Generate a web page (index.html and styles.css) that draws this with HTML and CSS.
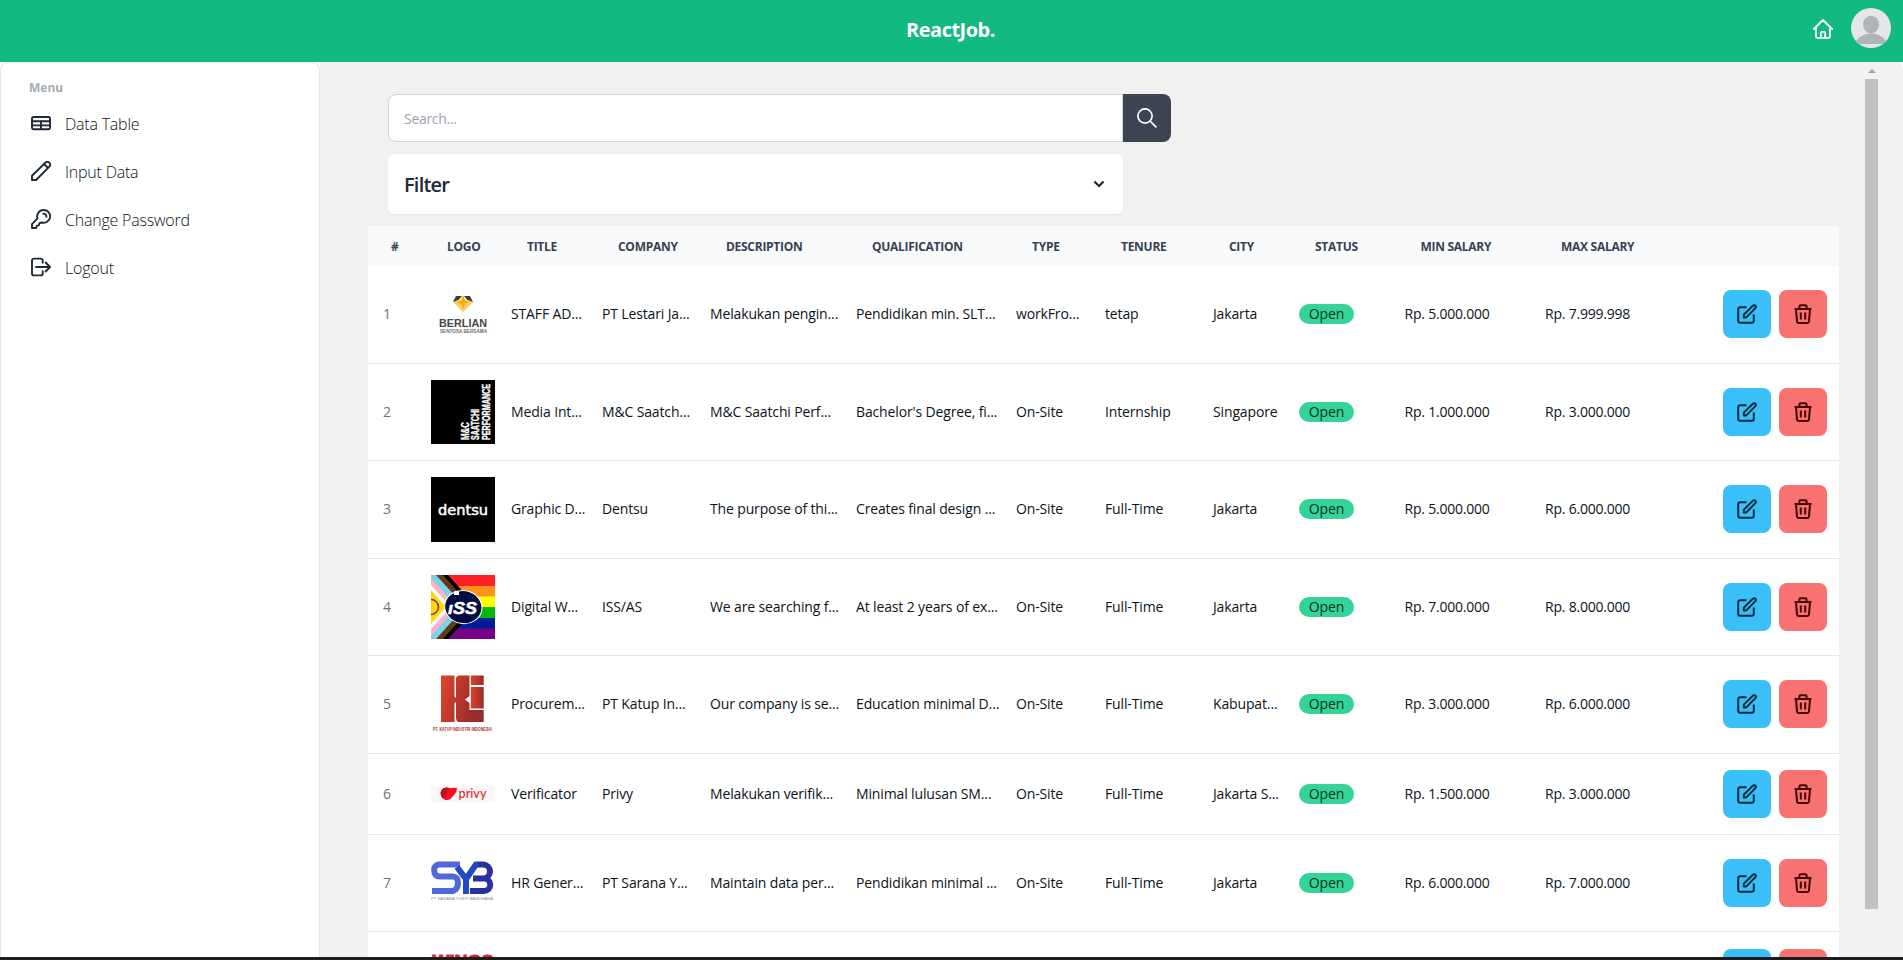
FILE: index.html
```html
<!DOCTYPE html>
<html lang="en">
<head>
<meta charset="utf-8">
<title>ReactJob.</title>
<link rel="stylesheet" href="styles.css">
</head>
<body>
<svg class="sprite" aria-hidden="true">
  <symbol id="i-edit" viewBox="0 0 20 20"><path d="M9.5 3.2H3.2A2 2 0 0 0 1.2 5.2V16.8A2 2 0 0 0 3.2 18.8H14.8A2 2 0 0 0 16.8 16.8V10.5M6.8 13.4V10.6L15.9 1.7A1.6 1.6 0 0 1 18.4 4.1L9.3 13.4Z"/></symbol>
  <symbol id="i-trash" viewBox="0 0 20 20"><path d="M1.5 4.9H18.5M6.4 4.6V2.4A1.2 1.2 0 0 1 7.6 1.2H12.4A1.2 1.2 0 0 1 13.6 2.4V4.6M3 5L4 17.4A1.6 1.6 0 0 0 5.6 18.9H14.4A1.6 1.6 0 0 0 16 17.4L17 5M7.8 8.4V15.6M12.2 8.4V15.6"/></symbol>
</svg>
<header class="topbar">
  <h1 class="brand">ReactJob.</h1>
  <nav class="tools">
    <svg class="home" viewBox="0 0 20 20"><path d="M.8 10L10 1L19.200 10M3 8.500V17.500A1.300 1.300 0 0 0 4.300 18.900H15.700A1.300 1.300 0 0 0 17 17.500V8.500M7.800 18.500V13.700A.8.800 0 0 1 8.600 12.900H11.400A.8.800 0 0 1 12.200 13.700V18.500"/></svg>
    <svg class="avatar" viewBox="0 0 40 40"><clipPath id="c-av"><circle cx="20" cy="20" r="20"/></clipPath><g clip-path="url(#c-av)"><rect width="40" height="40" fill="#e4e6e9"/><ellipse cx="20" cy="16.500" rx="8" ry="8.700" fill="#aeb4b7"/><path d="M4 36C6 29 13 25.500 20 25.500S34 29 36 36Z" fill="#aeb4b7"/></g></svg>
  </nav>
</header>
<div class="shell">
  <aside class="sidebar">
    <p class="menu-title">Menu</p>
    <a class="menu-item"><svg viewBox="0 0 20 20"><rect x="1" y="4" width="18" height="12.200" rx="1.600"/><path d="M1 8.300H19M1 12.400H19M10 8V16"/></svg><span>Data Table</span></a>
    <a class="menu-item"><svg viewBox="0 0 20 20"><path d="M1 19V14.800L14.300 1.700A2.400 2.400 0 0 1 18.300 5.700L5.200 19ZM13 3L17 7"/></svg><span>Input Data</span></a>
    <a class="menu-item"><svg viewBox="0 0 20 20"><path d="M12.600 1A6.400 6.400 0 1 1 10.800 13.500L8.600 14.200L7.700 16.400L5.900 16.700L5.200 19H1V15.200L6.500 9.400A6.400 6.400 0 0 1 12.600 1ZM12.200 4.600A3.300 3.300 0 0 1 15.400 7.800"/></svg><span>Change Password</span></a>
    <a class="menu-item"><svg viewBox="0 0 20 20"><path d="M11.700 5.800V3.600A2 2 0 0 0 9.700 1.600H3A2 2 0 0 0 1 3.600V16.400A2 2 0 0 0 3 18.400H9.700A2 2 0 0 0 11.700 16.400V14.200M5 10H19M14.700 5.500L19 10L14.700 14.500"/></svg><span>Logout</span></a>
  </aside>
  <main class="content">
    <div class="page">
      <form class="search">
        <div class="search-input">Search...</div>
        <div class="search-btn"><svg viewBox="0 0 20 20"><circle cx="8" cy="8" r="7.100"/><path d="M13 13L19.400 19.400"/></svg></div>
      </form>
      <div class="filter"><span>Filter</span><svg viewBox="0 0 12 8"><path d="M1.400 1.500L6 6L10.600 1.500"/></svg></div>
      <div class="table">
        <div class="row head"><span>#</span><span>LOGO</span><span>TITLE</span><span>COMPANY</span><span>DESCRIPTION</span><span>QUALIFICATION</span><span>TYPE</span><span>TENURE</span><span>CITY</span><span>STATUS</span><span>MIN SALARY</span><span>MAX SALARY</span></div>

        <div class="row"><span class="num">1</span>
          <svg class="logo" viewBox="0 0 64 64"><path d="M25 14H31L26 20H22Z M39 14H33L38 20H42Z" fill="#3a3d44"/><path d="M22 20L32 30L42 20L37 18L32 23L27 18Z" fill="#f9cd62"/><path d="M32 13L34 18L38 20L34 22L32 27L30 22L26 20L30 18Z" fill="#f5ae0b"/><text x="8" y="44.500" textLength="48" lengthAdjust="spacingAndGlyphs" font-size="11" font-weight="700" fill="#46474c">BERLIAN</text><text x="9" y="50.500" textLength="47" lengthAdjust="spacingAndGlyphs" font-size="4.500" font-weight="700" fill="#6c6c70">SENTOSA BERSAMA</text></svg>
          <span>STAFF AD...</span><span>PT Lestari Ja...</span><span>Melakukan pengin...</span><span>Pendidikan min. SLT...</span><span>workFro...</span><span>tetap</span><span>Jakarta</span><span class="badge">Open</span><span>Rp. 5.000.000</span><span>Rp. 7.999.998</span>
          <div class="actions"><i class="btn edit"><svg><use href="#i-edit"/></svg></i><i class="btn del"><svg><use href="#i-trash"/></svg></i></div></div>

        <div class="row"><span class="num">2</span>
          <svg class="logo" viewBox="0 0 64 64"><rect width="64" height="64"/><g transform="rotate(-90)" fill="#fff" stroke="#fff" stroke-width=".4" font-size="11.500" font-weight="700"><text x="-60" y="38.300" textLength="18" lengthAdjust="spacingAndGlyphs">M&amp;C</text><text x="-60" y="48.400" textLength="31" lengthAdjust="spacingAndGlyphs">SAATCHI</text><text x="-60" y="58.700" textLength="56" lengthAdjust="spacingAndGlyphs">PERFORMANCE</text></g></svg>
          <span>Media Int...</span><span>M&amp;C Saatch...</span><span>M&amp;C Saatchi Perf...</span><span>Bachelor's Degree, fi...</span><span>On-Site</span><span>Internship</span><span>Singapore</span><span class="badge">Open</span><span>Rp. 1.000.000</span><span>Rp. 3.000.000</span>
          <div class="actions"><i class="btn edit"><svg><use href="#i-edit"/></svg></i><i class="btn del"><svg><use href="#i-trash"/></svg></i></div></div>

        <div class="row"><span class="num">3</span>
          <svg class="logo tall" viewBox="0 0 64 65"><rect width="64" height="65"/><text class="dentsu" x="7" y="38" textLength="50" lengthAdjust="spacingAndGlyphs" font-size="14" fill="#fff" stroke="#fff" stroke-width=".5">dentsu</text></svg>
          <span>Graphic D...</span><span>Dentsu</span><span>The purpose of thi...</span><span>Creates final design ...</span><span>On-Site</span><span>Full-Time</span><span>Jakarta</span><span class="badge">Open</span><span>Rp. 5.000.000</span><span>Rp. 6.000.000</span>
          <div class="actions"><i class="btn edit"><svg><use href="#i-edit"/></svg></i><i class="btn del"><svg><use href="#i-trash"/></svg></i></div></div>

        <div class="row"><span class="num">4</span>
          <svg class="logo" viewBox="0 0 64 64"><rect width="64" height="11" fill="#ff1f28"/><rect y="11" width="64" height="11" fill="#ff921c"/><rect y="21.500" width="64" height="11" fill="#ff0"/><rect y="32" width="64" height="11" fill="#05b90b"/><rect y="43" width="64" height="11" fill="#021c99"/><rect y="53.500" width="64" height="10.500" fill="#770088"/><path d="M0 0H17L46 32L17 64H0Z" fill="#000"/><path d="M0 0H12L41 32L12 64H0Z" fill="#623a16"/><path d="M0 0H5L34 32L5 64H0Z" fill="#7bd3ea"/><path d="M0 3L26 32L0 61Z" fill="#ffb0c7"/><path d="M0 10L20 32L0 54Z" fill="#fff"/><path d="M0 15L15 32L0 49Z" fill="#ffd900"/><circle cx="0" cy="32" r="7.500" fill="none" stroke="#753096" stroke-width="1.500"/><path d="M-2 22H-12V42H-2Z" fill="none"/><ellipse cx="32.300" cy="32" rx="18.700" ry="16.500" transform="rotate(10 32 32)" fill="#030b45" stroke="#fff"/><rect x="23" y="16" width="5" height="4" fill="#fff"/><text x="17" y="38.500" textLength="29" lengthAdjust="spacingAndGlyphs" font-size="16" font-weight="700" font-style="italic" fill="#fff" stroke="#fff" stroke-width=".5">ıSS</text></svg>
          <span>Digital W...</span><span>ISS/AS</span><span>We are searching f...</span><span>At least 2 years of ex...</span><span>On-Site</span><span>Full-Time</span><span>Jakarta</span><span class="badge">Open</span><span>Rp. 7.000.000</span><span>Rp. 8.000.000</span>
          <div class="actions"><i class="btn edit"><svg><use href="#i-edit"/></svg></i><i class="btn del"><svg><use href="#i-trash"/></svg></i></div></div>

        <div class="row"><span class="num">5</span>
          <svg class="logo" viewBox="0 0 64 64"><defs><linearGradient id="g-ki" x1="10" x2="53" y1="0" y2="12" gradientUnits="userSpaceOnUse"><stop stop-color="#e04529"/><stop offset="1" stop-color="#982b2b"/></linearGradient><linearGradient id="g-i" x1="39" x2="53" y1="0" y2="0" gradientUnits="userSpaceOnUse"><stop stop-color="#e04529"/><stop offset="1" stop-color="#982b2b"/></linearGradient></defs><path d="M10 3.500H23.500V24.500L25 26V6Q25.500 3.500 28 3.500H38.500V24L34 27.500L38.500 31V38H52.700V50H27.500Q25 49 25 46V30.500H23.500V50H10Z" fill="url(#g-ki)"/><path d="M39.800 3.500H52.700V13H39.800Z M39.800 15H52.700V36.500H39.800Z" fill="url(#g-i)"/><text x="2" y="59" textLength="59" lengthAdjust="spacingAndGlyphs" font-size="4.500" font-weight="700" fill="#a33">PT. KATUP INDUSTRI INDONESIA</text></svg>
          <span>Procurem...</span><span>PT Katup In...</span><span>Our company is se...</span><span>Education minimal D...</span><span>On-Site</span><span>Full-Time</span><span>Kabupat...</span><span class="badge">Open</span><span>Rp. 3.000.000</span><span>Rp. 6.000.000</span>
          <div class="actions"><i class="btn edit"><svg><use href="#i-edit"/></svg></i><i class="btn del"><svg><use href="#i-trash"/></svg></i></div></div>

        <div class="row short"><span class="num">6</span>
          <svg class="logo" viewBox="0 0 64 64"><rect y="23.500" width="64" height="17" fill="#f8f8f8"/><path d="M15.500 25.500C18 25.500 19 26.500 20 26L26 25.800Q26 31 22 34C19 39 14 39 11.500 36C7 31 11 25.500 15.500 25.500Z" fill="#fb0b1c"/><path d="M10 33Q8.500 26 15.500 25.500L18 26.500L12 36.500Q10.500 35 10 33Z" fill="#bd1125"/><text class="privy" x="27.500" y="36" textLength="28" lengthAdjust="spacingAndGlyphs" font-size="12.500" fill="#ef2531">privy</text></svg>
          <span>Verificator</span><span>Privy</span><span>Melakukan verifik...</span><span>Minimal lulusan SM...</span><span>On-Site</span><span>Full-Time</span><span>Jakarta S...</span><span class="badge">Open</span><span>Rp. 1.500.000</span><span>Rp. 3.000.000</span>
          <div class="actions"><i class="btn edit"><svg><use href="#i-edit"/></svg></i><i class="btn del"><svg><use href="#i-trash"/></svg></i></div></div>

        <div class="row"><span class="num">7</span>
          <svg class="logo" viewBox="0 0 64 64"><g fill="none" stroke-width="6"><path d="M29 13.500H8A5 5 0 0 0 3.200 19Q3.200 25.500 9 25.500H22Q27 26 27 32T22 40H1" stroke="#5068dc"/><path d="M39 40H53A5.800 5.800 0 0 0 53 27.500H42H52A6.800 6.800 0 0 0 52 13.500H45" stroke="#29319c"/><path d="M26 16L35 28L46 12M35 26V43" stroke="#2447c4"/></g><text x="0" y="49" textLength="62" lengthAdjust="spacingAndGlyphs" font-size="3.800" fill="#8b8b98">PT SARANA YUKTI BANDHANA</text></svg>
          <span>HR Gener...</span><span>PT Sarana Y...</span><span>Maintain data per...</span><span>Pendidikan minimal ...</span><span>On-Site</span><span>Full-Time</span><span>Jakarta</span><span class="badge">Open</span><span>Rp. 6.000.000</span><span>Rp. 7.000.000</span>
          <div class="actions"><i class="btn edit"><svg><use href="#i-edit"/></svg></i><i class="btn del"><svg><use href="#i-trash"/></svg></i></div></div>

        <div class="row short last"><span class="num"></span>
          <svg class="logo" viewBox="0 0 64 64"><text x="1.500" y="26" textLength="61" lengthAdjust="spacingAndGlyphs" font-size="17" font-weight="700" fill="#d81f2c" stroke="#d81f2c">WINGS</text></svg>
          <span></span><span></span><span></span><span></span><span></span><span></span><span></span><span></span><span></span><span></span>
          <div class="actions"><i class="btn edit"><svg><use href="#i-edit"/></svg></i><i class="btn del"><svg><use href="#i-trash"/></svg></i></div></div>
      </div>
    </div>
    <div class="scrollbar"><b class="arrow"></b><b class="thumb"></b></div>
  </main>
</div>
<div class="edge"></div>
</body>
</html>
```
FILE: styles.css
```css
* { box-sizing: border-box; }
body { margin: 0; height: 960px; overflow: hidden; display: flex; flex-direction: column; background: #fff; color: #1f2937; font-family: "Open Sans", "Noto Sans", sans-serif; }
h1, p { margin: 0; }
svg { display: block; }
.sprite { display: none; }
.topbar { flex: none; height: 62px; background: #12b981; display: grid; grid-template-columns: 1fr auto 1fr; align-items: center; padding: 0 12px; }
.brand { grid-column: 2; color: #fff; font-size: 20px; line-height: 28px; font-weight: 700; letter-spacing: -.5px; padding-bottom: 2px; margin-right: 2px; }
.tools { justify-self: end; display: flex; align-items: center; gap: 18px; padding-bottom: 6px; }
.home { width: 20px; height: 20px; margin-top: 2px; fill: none; stroke: #fff; stroke-width: 1.800; stroke-linejoin: round; stroke-linecap: round; }
.avatar { width: 40px; height: 40px; }
.shell { flex: none; height: 895px; display: flex; overflow: hidden; }
.sidebar { flex: none; width: 320px; background: #fff; border: 1px solid #e5e7eb; border-bottom: 0; border-radius: 8px 8px 0 0; padding: 17px 28px; }
.menu-title { font-size: 12px; line-height: 16px; font-weight: 700; color: #a6abb2; margin-bottom: 3px; }
.menu-item { display: flex; align-items: center; gap: 14px; height: 48px; padding: 0 2px; font-size: 16px; font-weight: 300; letter-spacing: -.22px; color: #0b1220; }
.menu-item span { padding-top: 1px; }
.menu-item svg { width: 20px; height: 20px; fill: none; stroke: #1f2937; stroke-width: 1.900; stroke-linejoin: round; stroke-linecap: round; }
.content { flex: 1; display: flex; justify-content: space-between; background: #f1f1f1; border-top-right-radius: 8px; padding: 6px 25px 0 48px; }
.page { width: 1471px; padding-top: 26px; }
.search, .filter { margin-left: 20px; }
.search { display: flex; width: 783px; height: 48px; }
.search-input { flex: 1; background: #fff; border: 1px solid #d2d4d7; border-radius: 8px 0 0 8px; padding: 0 15px; font-size: 14px; line-height: 48px; letter-spacing: -.3px; color: #9ca3af; }
.search-btn { width: 48px; background: #3d4451; border-radius: 0 8px 8px 0; display: grid; place-items: center; }
.search-btn svg { width: 20px; height: 20px; fill: none; stroke: #fff; stroke-width: 1.700; }
.filter { display: flex; align-items: center; justify-content: space-between; width: 735px; height: 60px; margin-top: 12px; margin-bottom: 12px; padding: 0 18px 0 16px; background: #fff; border-radius: 6px; box-shadow: 0 1px 2px rgba(0,0,0,.06); font-size: 20px; font-weight: 600; letter-spacing: -.8px; }
.filter span { padding-top: 1px; }
.filter svg { width: 12px; height: 8px; fill: none; stroke: #1f2937; stroke-width: 2.200; }
.table { background: #fff; }
.row { display: grid; grid-template-columns: 48px 80px 91px 108px 146px 160px 89px 108px 86px 105.500px 140.500px 178px 104px; align-items: center; height: 97.5px; padding: 0 12px 0 15px; border-bottom: 1px solid #e5e7eb; font-size: 14px; font-weight: 500; letter-spacing: -.14px; line-height: 20px; white-space: nowrap; color: #0b1220; }
.row span:nth-child(n+11) { letter-spacing: -.22px; }
.row.head { height: 40px; background: #f9fafc; border: 0; padding-top: 1px; font-size: 12px; font-weight: 700; color: #374151; }
.row.head span { padding-left: 16px; letter-spacing: -.28px; }
.row.head span:first-child { padding-left: 8px; }
.row.short { height: 81px; }
.row.last { border: 0; }
.num { font-weight: 400; color: #6b7280; }
.logo { width: 64px; height: 64px; font-family: "Liberation Sans", sans-serif; letter-spacing: 0; }
.logo.tall { height: 65px; }
.dentsu { font-family: "DejaVu Sans", sans-serif; }
.privy { font-family: Lato, sans-serif; }
.badge { justify-self: start; width: 55px; height: 20px; border-radius: 10px; background: #36d399; color: #003320; text-align: center; line-height: 20px; }
.actions { display: flex; gap: 8px; }
.btn { width: 48px; height: 48px; border-radius: 8px; display: grid; place-items: center; }
.btn svg { width: 20px; height: 20px; fill: none; stroke: currentColor; stroke-width: 2; stroke-linejoin: round; }
.edit { background: #3abff8; color: #002b3d; }
.del { background: #f87272; color: #470000; }
.scrollbar { width: 13px; }
.arrow { display: block; width: 0; height: 0; margin: 1px auto 6px; border: 4px solid transparent; border-top: 0; border-bottom-color: #a3a3a3; }
.thumb { display: block; width: 13px; height: 830px; background: #c1c1c1; }
.edge { flex: none; height: 3px; background: #1b1d1f; }
```
